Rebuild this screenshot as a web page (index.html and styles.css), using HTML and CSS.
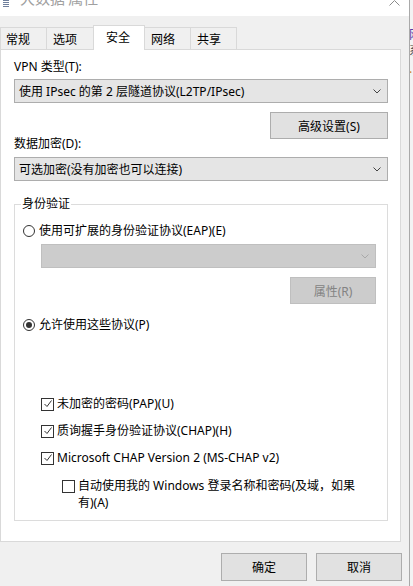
FILE: index.html
```html
<!DOCTYPE html>
<html lang="zh-CN">
<head>
<meta charset="utf-8">
<title>大数据 属性</title>
<link rel="stylesheet" href="styles.css">
</head>
<body>
<div class="screen">
  <div class="window">
    <div class="titlebar">
      <svg class="app-icon" width="6" height="7" viewBox="0 0 6 7"><path d="M0 0.5H6M0 2.5H6M0 4.5H6M0 6.5H6" stroke="#6f7f9c" stroke-width="1"/></svg>
      <span class="title">大数据 属性</span>
      <svg class="caret" width="11" height="6" viewBox="0 0 11 6"><path d="M0.5 5.5L5.5 0.5L10.5 5.5" fill="none" stroke="#8a8a8a" stroke-width="1"/></svg>
    </div>
    <div class="client">
      <div class="tabs">
        <div class="tab t1">常规</div>
        <div class="tab t2">选项</div>
        <div class="tab active">安全</div>
        <div class="tab t4">网络</div>
        <div class="tab t5">共享</div>
      </div>
      <div class="panel">
        <div class="label l1">VPN 类型(T):</div>
        <div class="combo">
          <span>使用 IPsec 的第 2 层隧道协议(L2TP/IPsec)</span>
          <svg class="chev" width="8" height="5" viewBox="0 0 8 5"><path d="M0.5 0.5L4 4L7.5 0.5" fill="none" stroke="#444" stroke-width="1"/></svg>
        </div>
        <div class="btn-row">
          <div class="btn adv">高级设置(S)</div>
        </div>
        <div class="label l2">数据加密(D):</div>
        <div class="combo c2">
          <span>可选加密(没有加密也可以连接)</span>
          <svg class="chev" width="8" height="5" viewBox="0 0 8 5"><path d="M0.5 0.5L4 4L7.5 0.5" fill="none" stroke="#444" stroke-width="1"/></svg>
        </div>
        <fieldset class="group">
          <legend>身份验证</legend>
          <div class="option r1">
            <span class="radio"></span>
            <span>使用可扩展的身份验证协议(EAP)(E)</span>
          </div>
          <div class="combo disabled">
            <span></span>
            <svg class="chev" width="8" height="5" viewBox="0 0 8 5"><path d="M0.5 0.5L4 4L7.5 0.5" fill="none" stroke="#a8a8a8" stroke-width="1"/></svg>
          </div>
          <div class="btn-row inner">
            <div class="btn disabled prop">属性(R)</div>
          </div>
          <div class="option r2">
            <span class="radio checked"></span>
            <span>允许使用这些协议(P)</span>
          </div>
          <div class="option chk ch1">
            <span class="box"><svg width="10" height="10" viewBox="0 0 10 10"><path d="M1.5 5L4 7.5L8.5 1.5" fill="none" stroke="#333" stroke-width="1"/></svg></span>
            <span>未加密的密码(PAP)(U)</span>
          </div>
          <div class="option chk ch2">
            <span class="box"><svg width="10" height="10" viewBox="0 0 10 10"><path d="M1.5 5L4 7.5L8.5 1.5" fill="none" stroke="#333" stroke-width="1"/></svg></span>
            <span>质询握手身份验证协议(CHAP)(H)</span>
          </div>
          <div class="option chk ch3">
            <span class="box"><svg width="10" height="10" viewBox="0 0 10 10"><path d="M1.5 5L4 7.5L8.5 1.5" fill="none" stroke="#333" stroke-width="1"/></svg></span>
            <span>Microsoft CHAP Version 2 (MS-CHAP v2)</span>
          </div>
          <div class="option chk ch4">
            <span class="box"></span>
            <span class="wrap">自动使用我的 Windows 登录名称和密码(及域，如果有)(A)</span>
          </div>
        </fieldset>
      </div>
      <div class="footer">
        <div class="btn foot">确定</div>
        <div class="btn foot">取消</div>
      </div>
    </div>
  </div>
  <div class="behind">
    <span class="g1">网</span>
    <span class="g2">系</span>
    <span class="g3">.</span>
  </div>
</div>
</body>
</html>
```

FILE: styles.css
```css
* { box-sizing: border-box; }
html, body {
  margin: 0;
  padding: 0;
  background: #f0f0f0;
}
body {
  font-family: "Noto Sans", "Noto Sans CJK SC", sans-serif;
  font-size: 12px;
  color: #000;
}
.screen {
  display: flex;
  width: 413px;
  height: 586px;
  overflow: hidden;
}
.window {
  width: 410px;
  height: 586px;
  border-right: 1px solid #a9a9a9;
  background: #f0f0f0;
  flex: none;
}
.titlebar {
  height: 16px;
  background: #fff;
  display: flex;
  align-items: flex-start;
  overflow: hidden;
}
.app-icon {
  margin-left: 3px;
  flex: none;
}
.title {
  margin-left: 11px;
  margin-top: -11px;
  font-family: "Noto Sans CJK SC", sans-serif;
  font-size: 15px;
  line-height: 18px;
  color: #a0a0a0;
}
.caret {
  margin-left: auto;
  margin-right: 9px;
  flex: none;
}
.client {
  padding-top: 9px;
}
.tabs {
  display: flex;
  align-items: flex-end;
  height: 24px;
  position: relative;
  z-index: 1;
}
.tab {
  height: 22px;
  border: 1px solid #d9d9d9;
  border-bottom: none;
  border-left: none;
  background: #f0f0f0;
  padding-left: 6px;
  line-height: 23px;
}
.t1 { width: 47px; border-left: 1px solid #d9d9d9; padding-left: 5px; }
.t2 { width: 47px; }
.t4 { width: 46px; border-left: none; }
.t5 { width: 46px; }
.tab.active {
  width: 52px;
  height: 25px;
  margin-bottom: -1px;
  margin-left: -1px;
  border-left: 1px solid #d9d9d9;
  background: #fff;
  padding-left: 12px;
  line-height: 24px;
}
.panel {
  width: 401px;
  height: 493px;
  background: #fff;
  border: 1px solid #d9d9d9;
  padding: 0 12px 0 13px;
}
.label {
  line-height: 14px;
}
.l1 { margin-top: 10px; }
.l2 { margin-top: -2px; }
.combo {
  height: 24px;
  margin-top: 5px;
  background: #e5e5e5;
  border: 1px solid #adadad;
  display: flex;
  align-items: center;
  padding: 0 6px 0 4px;
}
.combo span { flex: 1; }
.combo .chev { flex: none; }
.c2 { margin-top: 6px; }
.combo.disabled {
  margin: 5px 0 0 18px;
  background: #cccccc;
  border-color: #bfbfbf;
}
.btn-row {
  display: flex;
  justify-content: flex-end;
  margin-top: 9px;
}
.btn {
  height: 27px;
  background: #e1e1e1;
  border: 1px solid #adadad;
  display: flex;
  align-items: center;
  justify-content: center;
}
.adv { width: 118px; }
.btn.disabled {
  background: #cccccc;
  border-color: #bfbfbf;
  color: #838383;
}
.prop { width: 86px; }
.group {
  margin: 16px 0 0 0;
  padding: 0 11px 0 8px;
  border: 1px solid #dcdcdc;
  height: 324px;
  min-width: 0;
}
.group legend {
  padding: 0 1px;
  margin-left: -2px;
  line-height: 14px;
}
.option {
  display: flex;
  align-items: center;
  line-height: 16px;
}
.r1 { margin-top: 12px; }
.r2 { margin-top: 13px; }
.radio {
  width: 12px;
  height: 12px;
  border: 1px solid #333;
  border-radius: 50%;
  margin-right: 4px;
  flex: none;
  display: flex;
  align-items: center;
  justify-content: center;
}
.radio.checked::after {
  content: "";
  width: 6px;
  height: 6px;
  border-radius: 50%;
  background: #333;
}
.chk { margin-left: 18px; }
.ch1 { margin-top: 63px; }
.ch2, .ch3 { margin-top: 11px; }
.box {
  width: 13px;
  height: 13px;
  border: 1px solid #333;
  margin-right: 3px;
  flex: none;
  display: flex;
  align-items: center;
  justify-content: center;
}
.ch4 {
  margin-top: 11px;
  margin-left: 39px;
  align-items: flex-start;
  line-height: 17px;
}
.ch4 .box { margin-top: 3px; margin-right: 3px; }
.wrap { width: 290px; }
.footer {
  display: flex;
  justify-content: flex-end;
  gap: 9px;
  margin-top: 11px;
  padding-right: 7px;
}
.btn.foot {
  width: 86px;
  height: 28px;
}
.behind {
  width: 3px;
  flex: none;
  background: #f3f3f3;
  overflow: hidden;
  display: flex;
  flex-direction: column;
  font-family: "Noto Sans CJK SC", sans-serif;
  font-size: 12px;
  line-height: 14px;
}
.behind span { margin-left: -1px; }
.g1 { margin-top: 27px; color: #5b3fa8; }
.g2 { margin-top: 2px; color: #555; }
.g3 { margin-top: 4px; color: #d08a2a; }
```
